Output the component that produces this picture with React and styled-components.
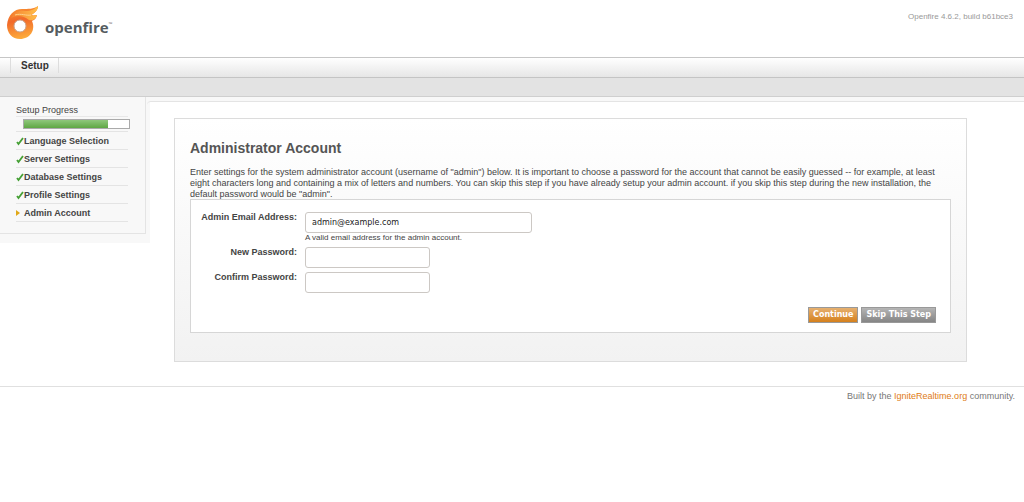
import React from "react";
import styled, { createGlobalStyle } from "styled-components";

const GlobalStyle = createGlobalStyle`
  * { box-sizing: border-box; }
  body {
    margin: 0;
    background: #fff;
    color: #444;
    font: 9px/11px "Liberation Sans", Arial, sans-serif;
  }
`;

const Header = styled.header`
  display: flex;
  justify-content: space-between;
  align-items: flex-start;
  height: 57px;
  padding: 6px 11px 0 7px;
`;

const Logo = styled.div`
  display: flex;
  align-items: flex-start;
  gap: 5px;
`;

const Wordmark = styled.span`
  padding-top: 10px;
  color: #555c60;
  font: 700 15px/22px "Open Sans", sans-serif;
`;

const Trademark = styled.span`
  color: #777;
  font-size: 5px;
  vertical-align: 7px;
  line-height: 5px;
`;

const Version = styled.span`
  padding-top: 5px;
  color: #999;
  font-size: 8px;
`;

const Nav = styled.nav`
  display: flex;
  height: 21px;
  padding-left: 10px;
  border-top: 1px solid #c6c6c6;
  border-bottom: 1px solid #c4c4c4;
  background: linear-gradient(#fff, #e6e6e6);
`;

const NavTab = styled.a`
  height: 15px;
  padding: 0 9px 0 10px;
  border: solid #ddd;
  border-width: 0 1px;
  color: #333;
  font-size: 10px;
  font-weight: bold;
  line-height: 16px;
  text-decoration: none;
`;

const SubNav = styled.div`
  height: 19px;
  border-bottom: 1px solid #cfcfcf;
  background: #e3e3e3;
`;

const Body = styled.div`
  display: flex;
  align-items: flex-start;
  background: linear-gradient(#f8f8f8 4px, transparent 4px);
`;

const Sidebar = styled.aside`
  flex: 0 0 150px;
  padding: 0 4px 9px 0;
  background: #f8f8f8;
`;

const SidebarInner = styled.div`
  padding: 8px 17px 11px 16px;
  border: solid #e4e4e4;
  border-width: 0 1px 1px 0;
`;

const SidebarTitle = styled.div`
  height: 12px;
  border-bottom: 1px solid #e8e8e8;
`;

const Progress = styled.div`
  height: 10px;
  margin: 2px -2px 2px 7px;
  border: 1px solid #aaa;
  background: #fff;
`;

const ProgressFill = styled.div`
  height: 100%;
  background: linear-gradient(#8fc77c, #5fa744);
`;

const Steps = styled.ul`
  margin: 0;
  padding: 0;
  list-style: none;
  border-top: 1px solid #e4e4e4;
`;

const Step = styled.li`
  display: flex;
  align-items: center;
  height: 18px;
  padding-top: 1px;
  border-bottom: 1px solid #e4e4e4;
  font-weight: bold;
  white-space: nowrap;

  svg { flex: none; }
`;

const Main = styled.main`
  flex: 1;
  margin: 4px 0 0 -3px;
  padding: 16px 57px 24px 27px;
  border-top: 1px solid #e4e4e4;
  border-top-left-radius: 4px;
`;

const Panel = styled.section`
  padding: 21px 15px 28px;
  border: 1px solid #dcdcdc;
  background: linear-gradient(#fff, #f2f2f2);
`;

const Title = styled.h1`
  margin: 0 0 10px;
  color: #555;
  font-size: 14px;
  line-height: 17px;
`;

const Intro = styled.p`
  margin: 0 0 -1px;
`;

const Form = styled.form`
  padding: 12px 14px 9px 9px;
  border: 1px solid #d6d6d6;
  background: #fff;
`;

const Field = styled.div`
  display: grid;
  grid-template-columns: 98px 1fr;
  column-gap: 7px;
  margin-bottom: 4px;
`;

const Label = styled.label`
  padding-right: 1px;
  font-weight: bold;
  text-align: right;
  white-space: nowrap;
`;

const Input = styled.input`
  display: block;
  width: ${(p) => (p.$wide ? "227px" : "125px")};
  height: 21px;
  padding: 0 6px;
  border: 1px solid #ccc8c4;
  border-radius: 3px;
  background: #fff;
  color: #222;
  font: 8px/11px "DejaVu Sans", sans-serif;
`;

const Hint = styled.div`
  font-size: 8px;
  line-height: 10px;
`;

const Actions = styled.div`
  display: flex;
  justify-content: flex-end;
  gap: 3px;
  margin-top: 14px;
`;

const Button = styled.button`
  height: 16px;
  padding: 0 4px;
  border: 1px solid #999;
  background: ${(p) =>
    p.$primary
      ? "linear-gradient(#e6b070, #d5801c)"
      : "linear-gradient(#b5b5b5, #858585)"};
  color: #fff;
  font: bold 8px/12px "DejaVu Sans", Verdana, sans-serif;
  white-space: nowrap;
`;

const Footer = styled.footer`
  padding: 4px 9px;
  border-top: 1px solid #e0e0e0;
  color: #777;
  text-align: right;
`;

const FooterLink = styled.a`
  color: #e07b14;
  text-decoration: none;
`;

function Flame() {
  return (
    <svg width="33" height="34" viewBox="0 0 33 34" aria-hidden="true">
      <defs>
        <linearGradient id="ring" x1="0.2" y1="0" x2="0.4" y2="1">
          <stop offset="0" stopColor="#fa9a35" />
          <stop offset="0.45" stopColor="#f1692a" />
          <stop offset="1" stopColor="#fdac3c" />
        </linearGradient>
        <linearGradient id="tail" x1="0" y1="0" x2="1" y2="0">
          <stop offset="0" stopColor="#f58232" />
          <stop offset="1" stopColor="#ffc04a" />
        </linearGradient>
      </defs>
      <path
        fill="url(#ring)"
        d="M0 19C1 9 7 3 15 3C21 3 27 3 31 0C31 4 28 7 24 9C27 10 29 9 30 9C29 13 27 14 25 15C29 24 23 33 13 33C5 33 0 27 0 19Z"
      />
      <path
        fill="url(#tail)"
        d="M4 12C7 6 12 4 18 5C24 5 28 3 31 0C31 4 28 7 24 9C27 10 29 9 30 9C29 13 26 15 22 14C16 9 9 9 4 12Z"
      />
      <path
        fill="none"
        stroke="#ffd08a"
        d="M8 9C14 7 19 10 24 9"
      />
      <circle cx="13" cy="20" r="6" fill="#fff" stroke="#c9a590" />
    </svg>
  );
}

function Check() {
  return (
    <svg width="8" height="9" viewBox="0 0 8 9" aria-hidden="true">
      <path
        d="M1 5L2.5 7L7 1"
        fill="none"
        stroke="#45a035"
        strokeWidth="1.8"
      />
    </svg>
  );
}

function Arrow() {
  return (
    <svg width="8" height="6" viewBox="0 0 8 6" aria-hidden="true">
      <path d="M0 0L4 3L0 6Z" fill="#e0a818" />
    </svg>
  );
}

const STEPS = [
  { name: "Language Selection", done: true },
  { name: "Server Settings", done: true },
  { name: "Database Settings", done: true },
  { name: "Profile Settings", done: true },
  { name: "Admin Account", done: false },
];

export default function App() {
  return (
    <>
      <GlobalStyle />
      <Header>
        <Logo>
          <Flame />
          <Wordmark>
            openfire<Trademark>™</Trademark>
          </Wordmark>
        </Logo>
        <Version>Openfire 4.6.2, build b61bce3</Version>
      </Header>
      <Nav>
        <NavTab href="#setup">Setup</NavTab>
      </Nav>
      <SubNav />
      <Body>
        <Sidebar>
          <SidebarInner>
            <SidebarTitle>Setup Progress</SidebarTitle>
            <Progress>
              <ProgressFill style={{ width: "80%" }} />
            </Progress>
            <Steps>
              {STEPS.map((step) => (
                <Step key={step.name}>
                  {step.done ? <Check /> : <Arrow />}
                  {step.name}
                </Step>
              ))}
            </Steps>
          </SidebarInner>
        </Sidebar>
        <Main>
          <Panel>
            <Title>Administrator Account</Title>
            <Intro>
              Enter settings for the system administrator account (username of
              "admin") below. It is important to choose a password for the
              account that cannot be easily guessed -- for example, at least
              eight characters long and containing a mix of letters and numbers.
              You can skip this step if you have already setup your admin
              account. if you skip this step during the new installation, the
              default password would be "admin".
            </Intro>
            <Form onSubmit={(e) => e.preventDefault()}>
              <Field>
                <Label htmlFor="email">Admin Email Address:</Label>
                <div>
                  <Input
                    id="email"
                    type="text"
                    $wide
                    defaultValue="admin@example.com"
                  />
                  <Hint>A valid email address for the admin account.</Hint>
                </div>
              </Field>
              <Field>
                <Label htmlFor="password">New Password:</Label>
                <Input id="password" type="password" />
              </Field>
              <Field>
                <Label htmlFor="confirm">Confirm Password:</Label>
                <Input id="confirm" type="password" />
              </Field>
              <Actions>
                <Button type="submit" $primary>
                  Continue
                </Button>
                <Button type="button">Skip This Step</Button>
              </Actions>
            </Form>
          </Panel>
        </Main>
      </Body>
      <Footer>
        Built by the <FooterLink href="#community">IgniteRealtime.org</FooterLink>{" "}
        community.
      </Footer>
    </>
  );
}
